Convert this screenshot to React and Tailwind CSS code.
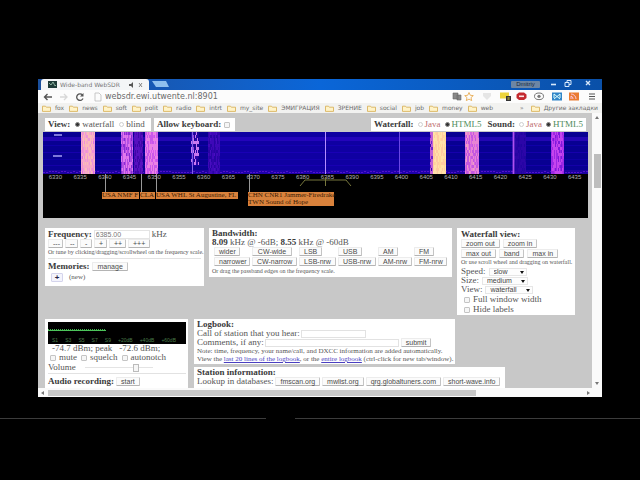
import React from "react";

const serif = "font-['Liberation_Serif',serif]";
const sans = "font-['Liberation_Sans',sans-serif]";

function Btn({ children, className = "" }) {
  return (
    <button
      className={`h-[9px] whitespace-nowrap rounded-[1px] border border-[#ececec] border-b-[#b4b4b4] border-r-[#c4c4c4] bg-[#fbfbfb] px-[4px] font-['Liberation_Sans',sans-serif] text-[7px] leading-[7px] text-[#4a4a4a] ${className}`}
    >
      {children}
    </button>
  );
}

function Radio({ name, checked, label, color = "text-[#555]" }) {
  return (
    <label className={`flex items-center gap-[2px] ${color}`}>
      <input
        type="radio"
        name={name}
        defaultChecked={checked}
        className="size-[5px] appearance-none rounded-full border border-[#cfcfcf] bg-white checked:border-[#888] checked:bg-[#333]"
      />
      {label}
    </label>
  );
}

function Check({ label, className = "gap-[3px]" }) {
  return (
    <label className={`flex items-center ${className}`}>
      <input type="checkbox" className="size-[6px] appearance-none rounded-[1px] border border-[#c4c4c4] bg-[#f6f6f6]" />
      {label}
    </label>
  );
}

function Pick({ label, value, width, indent = "pl-[4px]" }) {
  return (
    <label className="flex h-[9px] items-center gap-[3px]">
      {label}
      <span className={`relative flex ${width}`}>
        <select className={`h-[8px] w-full appearance-none border border-[#e6e6e6] bg-[#fdfdfd] font-['Liberation_Sans',sans-serif] text-[7px] leading-[6px] text-[#444] ${indent}`}>
          <option>{value}</option>
        </select>
        <svg viewBox="0 0 4 3" className="pointer-events-none absolute right-[3px] top-[3px] h-[3px] w-[4px]">
          <path d="M0 0h4L2 3z" fill="#111" />
        </svg>
      </span>
    </label>
  );
}

function Folder({ children }) {
  return (
    <a href="#" className="flex items-center gap-[4px] whitespace-nowrap">
      <svg viewBox="0 0 9 7" className="h-[7px] w-[9px]">
        <path d="M.5 1.2h3l.8 1h4.2v4.2h-8z" fill="#fff3c8" stroke="#d9b35e" strokeWidth=".9" />
      </svg>
      {children}
    </a>
  );
}

function rand(i, j) {
  const s = Math.sin(i * 127.1 + j * 311.7) * 43758.5453;
  return s - Math.floor(s);
}

const bands = [
  { x: 38, w: 14, colors: ["#e070e8", "#f090d8", "#f7a9c8", "#fbbcb8", "#ee98d8"] },
  { x: 78, w: 12, colors: ["#b848e4", "#b050e4", "#e078ee", "#8a2cd4", "#d868e8"] },
  { x: 91, w: 9, colors: ["#4a08b4", "#5810c0", "#4006a8"] },
  { x: 102, w: 13, colors: ["#d65cec", "#ea84e4", "#c858ea", "#ec7af0"] },
  { x: 148, w: 8, h: 32, colors: ["#9a3ce0", "#2a08a8", "#c878f0", "#1a0496"] },
  { x: 165, w: 12, colors: ["#3204ac", "#3e08b8", "#2804a4", "#480ec0"] },
  { x: 387, w: 3, colors: ["#7020d0", "#c060d8", "#3008a8"] },
  { x: 390, w: 13, colors: ["#ffd89a", "#ffe2a8", "#ffcca0", "#ffdca8"] },
  { x: 422, w: 14, colors: ["#d464e4", "#e884d4", "#c458e0", "#f09cc8"] },
  { x: 471, w: 12, colors: ["#2604a4", "#2c06a8", "#2004a0"] },
  { x: 508, w: 13, colors: ["#b030ec", "#9c28e4", "#c444ee", "#8018dc"] },
];

function Waterfall() {
  const cells = [];
  bands.forEach((b, k) => {
    const height = b.h || 42;
    for (let x = 0; x < b.w; x++) {
      for (let y = 0; y < height; y += 3) {
        const mix = rand(x + k * 31, 1) * 0.5 + rand(x + k * 17, y) * 0.5;
        cells.push(
          <rect key={`${k}-${x}-${y}`} x={b.x + x} y={y} width="1" height="3" fill={b.colors[Math.floor(mix * b.colors.length)]} />
        );
      }
    }
  });
  const specks = [];
  for (let x = 0; x < 545; x += 3) {
    specks.push(<rect key={x} x={x} y={39 + Math.floor(rand(x, 5) * 2)} width="2" height="1" fill="#5212cc" />);
  }
  return (
    <svg viewBox="0 0 545 42" preserveAspectRatio="none" className="block h-[42px] w-full">
      <rect width="545" height="42" fill="#080092" />
      <rect y="5" width="545" height="4" fill="#2406b4" />
      <rect y="13" width="545" height="1" fill="#1000a8" />
      <rect y="20" width="545" height="1" fill="#1600ac" />
      <rect y="27" width="545" height="1" fill="#0e00a4" />
      <rect y="33" width="545" height="1" fill="#1400a8" />
      <rect y="38" width="545" height="4" fill="#1c02a0" />
      <rect x="177" width="210" height="42" fill="#2400cc" opacity=".28" />
      {specks}
      {cells}
      <path d="M11 3h8M10 24h9" stroke="#a6a0f4" strokeWidth="1.5" />
      <path d="M149.500 0v42" stroke="#8060e8" strokeWidth="1" />
      <path d="M282.500 0v42" stroke="#b48cff" strokeWidth="1" />
      <path d="M356.500 0v42" stroke="#6a48e4" strokeWidth="1" />
      <path d="M470.500 0v42" stroke="#b050f0" strokeWidth="1.800" />
    </svg>
  );
}

function Station({ className, children }) {
  return (
    <div className={`absolute top-[60px] whitespace-nowrap bg-[#d9823c] text-[7px] leading-[7px] text-[#3c1c04] ${className}`}>
      {children}
    </div>
  );
}

const steps = Array.from({ length: 22 }, (_, i) => 6330 + i * 5);

function TitleBar() {
  return (
    <header className="flex h-[11px] items-end bg-gradient-to-r from-[#1a4f9c] via-[#0a66d8] to-[#0a50a8] pl-[3px]">
      <div className="flex h-[11px] w-[108px] items-center rounded-t-[3px] bg-[#f3f5f7] pl-[7px] pr-[6px]">
        <svg viewBox="0 0 9 7" className="h-[7px] w-[9px] shrink-0">
          <rect width="9" height="7" fill="#1c3a38" />
          <path d="M1 2l2 2 2-3 2 4 1-1" fill="none" stroke="#9fc8b4" strokeWidth=".8" />
        </svg>
        <span className="ml-[3px] grow whitespace-nowrap font-['DejaVu_Sans',sans-serif] text-[6px] leading-[9px] text-[#777]">Wide-band WebSDR</span>
        <svg viewBox="0 0 14 6" className="h-[6px] w-[14px] shrink-0">
          <path d="M0 2h2l2-2v6L2 4H0z" fill="#555" />
          <path d="M10 1l3 4M13 1l-3 4" stroke="#777" strokeWidth=".9" />
        </svg>
      </div>
      <svg viewBox="0 0 18 7" className="mb-[2px] ml-[3px] h-[7px] w-[18px]">
        <path d="M0 0h14l3 6H4z" fill="#8fc0ee" />
      </svg>
      <div className="grow" />
      <button className="mb-[2px] h-[7px] w-[29px] rounded-[1px] bg-[#6d86a4] font-['Liberation_Sans',sans-serif] text-[6px] leading-[7px] text-[#16263c]">Dmitriy</button>
      <svg viewBox="0 0 62 9" className="mb-[2px] h-[9px] w-[62px]" stroke="#d6e8fb" fill="none">
        <path d="M11 5.500h5" strokeWidth="1.600" />
        <path d="M25 3.500h4v4h-4zM27 3.500v-2h4v4h-2" strokeWidth="1" />
        <path d="M46 2l4 4M50 2l-4 4" strokeWidth="1.400" />
      </svg>
    </header>
  );
}

function Toolbar() {
  return (
    <nav className="flex h-[13px] items-center bg-[#fcfcfc] pl-[5px] pr-[6px]">
      <svg viewBox="0 0 60 10" className="h-[10px] w-[60px] shrink-0" fill="none">
        <path d="M9 5H1.500M4.500 2L1.500 5l3 3" stroke="#555" strokeWidth="1.400" />
        <path d="M17 5h7M21 2l3 3-3 3" stroke="#d8d8d8" strokeWidth="1.300" />
        <path d="M39.500 3A3.300 3.300 0 1 0 40 6.500" stroke="#555" strokeWidth="1.300" />
        <path d="M40.500 1v3.500H37z" fill="#555" />
        <path d="M52 1h4l2 2v6h-6z" stroke="#bbb" strokeWidth=".8" />
      </svg>
      <label className="flex grow">
        <input
          aria-label="Address"
          defaultValue="websdr.ewi.utwente.nl:8901"
          className="w-full bg-transparent pl-[2px] font-['DejaVu_Sans',sans-serif] text-[8px] leading-[11px] text-[#6a6a6a] outline-none"
        />
      </label>
      <svg viewBox="0 0 148 11" className="h-[11px] w-[148px] shrink-0" fill="none">
        <path d="M5 2h5v6H5zM9 4h4v5H9z" fill="#888" stroke="#666" strokeWidth=".6" />
        <path d="M21 1.500l1.300 2.800 3 .3-2.300 2 .7 3-2.700-1.500-2.700 1.500.7-3-2.300-2 3-.3z" stroke="#e8ad55" strokeWidth=".9" />
        <path d="M35 2h8v3l-4 4-4-4z" fill="#e6e6e6" />
        <rect x="52" y="1.500" width="9" height="6" fill="#ecd43c" />
        <rect x="58" y="5" width="5" height="5" fill="#333" />
        <path d="M60 6v3M61 6v3" stroke="#e6d23c" strokeWidth=".6" />
        <path d="M71 1.500h5l2.500 2v3.500l-2.500 2h-5l-2.500-2v-3.500z" fill="#c42a30" />
        <path d="M71 5.300h5" stroke="#fbe6e6" strokeWidth="1.600" />
        <ellipse cx="91" cy="5.300" rx="4.500" ry="3.300" stroke="#777" strokeWidth="1" />
        <circle cx="91" cy="5.300" r="1.600" fill="#777" />
        <rect x="104" y="1.500" width="10" height="8" fill="#2f84c8" />
        <path d="M106 3l6 5M112 3l-6 5M106 3v4M112 3v4" stroke="#dff" strokeWidth="1" />
        <rect x="121" y="1.500" width="10" height="8" fill="#e97c32" />
        <path d="M123 8V5M125 8a3 3 0 0 0-2-3M128 8a5 5 0 0 0-5-5" stroke="#fce" strokeWidth=".9" />
        <path d="M141 3h6M141 5.500h6M141 8h6" stroke="#555" strokeWidth="1.200" />
      </svg>
    </nav>
  );
}

function Bookmarks() {
  return (
    <nav className="flex h-[10px] items-center bg-[#f2f2f0] pl-[4px] pr-[4px] font-['DejaVu_Sans',sans-serif] text-[6px] leading-[8px] text-[#6b6b6b]">
      <div className="flex gap-[5px]">
        {["fox", "news", "soft", "polit", "radio", "intrt", "my_site", "ЭМИГРАЦИЯ", "ЗРЕНИЕ", "social", "job", "money", "web"].map((b) => (
          <Folder key={b}>{b}</Folder>
        ))}
      </div>
      <span className="grow pr-[7px] text-right">»</span>
      <Folder>Другие закладки</Folder>
    </nav>
  );
}

function Receiver() {
  return (
    <section className="relative h-[86px] bg-black">
      <Waterfall />
      <div className={`mr-[1px] grid text-center text-[6px] leading-[6px] text-[#b4b4b4] [grid-template-columns:repeat(22,minmax(0,1fr))] ${sans}`}>
        {steps.map((s) => (
          <span key={s}>{s}</span>
        ))}
      </div>
      <svg viewBox="0 0 545 44" className="absolute left-0 top-[42px] h-[44px] w-[545px]" fill="none">
        <path d="M62.500 0v18M98.500 0v18M113.500 0v18M206.500 0v18" stroke="#999" strokeWidth="1" />
        <path d="M257 12l5-6h41l5 6M282.500 3v9" stroke="#77773c" strokeWidth="1" />
      </svg>
      <Station className="left-[59px] h-[7px] w-[37px]">USA NMF F</Station>
      <Station className="left-[97px] h-[7px] w-[15px]">CLA</Station>
      <Station className="left-[113px] h-[7px] w-[82px]">USA WHL St Augustine, FL</Station>
      <Station className="left-[205px] h-[14px] w-[86px]">
        CHN CNR1 Jammer-Firedrake
        <br />
        TWN Sound of Hope
      </Station>
    </section>
  );
}

const widths = [
  ["wider", "w-[26px]"],
  ["CW-wide", "w-[40px]"],
  ["LSB", "w-[23px]"],
  ["USB", "w-[24px]"],
  ["AM", "w-[20px]"],
  ["FM", "w-[20px]"],
  ["narrower", "w-[36px]"],
  ["CW-narrow", "w-[45px]"],
  ["LSB-nrw", "w-[37px]"],
  ["USB-nrw", "w-[38px]"],
  ["AM-nrw", "w-[34px]"],
  ["FM-nrw", "w-[33px]"],
];

const tuning = [
  ["---", "w-[15px]"],
  ["--", "w-[13px]"],
  ["-", "w-[12px]"],
  ["+", "w-[13px]"],
  ["++", "w-[17px]"],
  ["+++", "w-[22px]"],
];

function Meter() {
  const dots = [];
  for (let x = 0; x < 58; x += 2) {
    dots.push(<rect key={x} x={x} y={7} width="1" height="2" fill="#3fae4c" />);
  }
  return (
    <div className="h-[22px] bg-black">
      <svg viewBox="0 0 138 15" className="block h-[15px] w-[138px]">
        {dots}
        <rect y="8" width="58" height="1" fill="#4cc45a" />
      </svg>
      <div className={`flex justify-between pl-[4px] pr-[10px] text-[5px] leading-[6px] text-[#4b7d4b] ${sans}`}>
        {["S1", "S3", "S5", "S7", "S9", "+20dB", "+40dB", "+60dB"].map((s) => (
          <span key={s}>{s}</span>
        ))}
      </div>
    </div>
  );
}

function Page() {
  const bold = "font-bold text-[#3a3a3a]";
  return (
    <main className={`grow bg-[#c8c8c8] pl-[5px] pr-[4px] pt-[5px] text-[9px] leading-[9px] text-[#555] ${serif}`}>
      <div className="mb-[1px] flex h-[13px] gap-[3px] pl-[2px] pr-[2px] *:flex *:items-center *:whitespace-nowrap *:bg-white">
        <fieldset className="w-[106px] gap-[5px] pl-[3px]">
          <b className={bold}>View:</b>
          <Radio name="view" checked label="waterfall" />
          <Radio name="view" label="blind" />
        </fieldset>
        <label className="w-[81px] gap-[3px] pl-[3px]">
          <b className={bold}>Allow keyboard:</b>
          <input type="checkbox" className="size-[6px] appearance-none rounded-[1px] border border-[#c4c4c4] bg-[#f6f6f6]" />
        </label>
        <fieldset className="ml-auto w-[215px] gap-[4px] pl-[3px]">
          <b className={bold}>Waterfall:</b>
          <Radio name="wf" label="Java" color="text-[#c07070]" />
          <Radio name="wf" checked label="HTML5" color="text-[#4f8c5c]" />
          <b className={`ml-[2px] ${bold}`}>Sound:</b>
          <Radio name="snd" label="Java" color="text-[#c07070]" />
          <Radio name="snd" checked label="HTML5" color="text-[#4f8c5c]" />
        </fieldset>
      </div>

      <Receiver />

      <div className="mt-[10px] flex items-start gap-[5px] pl-[2px]">
        <section className="h-[58px] w-[159px] bg-white px-[3px] pt-[2px]">
          <label className="flex h-[9px] items-center gap-[2px]">
            <b className={bold}>Frequency:</b>
            <input defaultValue="6385.00" className={`h-[9px] w-[56px] border border-[#e4e4e4] pl-[1px] text-[7px] text-[#777] ${sans}`} />
            kHz
          </label>
          <div className="flex gap-[2px]">
            {tuning.map(([t, w]) => (
              <Btn key={t} className={`px-[0px] ${w}`}>{t}</Btn>
            ))}
          </div>
          <p className="whitespace-nowrap pb-[2px] text-[6px] leading-[8px]">Or tune by clicking/dragging/scrollwheel on the frequency scale.</p>
          <hr className="mb-[3px] border-[#e2e2e2]" />
          <div className="flex items-center gap-[3px]">
            <b className={bold}>Memories:</b>
            <Btn>manage</Btn>
          </div>
          <div className="mt-[2px] flex items-center gap-[6px] pl-[3px] text-[7px]">
            <button className={`h-[9px] w-[12px] rounded-[1px] border border-[#d4d4ec] bg-[#f4f4fc] text-[8px] font-bold leading-[7px] text-[#224] ${sans}`}>+</button>
            (new)
          </div>
        </section>

        <section className="h-[49px] w-[243px] bg-white px-[3px] pt-[1px]">
          <h2 className={bold}>Bandwidth:</h2>
          <p><b className={bold}>8.09</b> kHz @ -6dB; <b className={bold}>8.55</b> kHz @ -60dB</p>
          <div className="grid grid-cols-[38px_47px_39px_40px_36px_34px] gap-y-[1px] pl-[2px]">
            {widths.map(([t, w]) => (
              <Btn key={t} className={`px-[0px] ${w}`}>{t}</Btn>
            ))}
          </div>
          <p className="mt-[1px] text-[6px] leading-[8px]">Or drag the passband edges on the frequency scale.</p>
        </section>

        <section className="h-[87px] w-[118px] bg-white px-[4px] pt-[2px]">
          <h2 className={bold}>Waterfall view:</h2>
          <div className="mb-[1px] flex gap-[3px]">
            <Btn>zoom out</Btn>
            <Btn>zoom in</Btn>
          </div>
          <div className="flex gap-[3px]">
            <Btn>max out</Btn>
            <Btn>band</Btn>
            <Btn>max in</Btn>
          </div>
          <p className="whitespace-nowrap text-[6px] leading-[9px]">Or use scroll wheel and dragging on waterfall.</p>
          <Pick label="Speed:" value="slow" width="w-[38px]" />
          <Pick label="Size:" value="medium" width="w-[46px]" />
          <Pick label="View:" value="waterfall" width="w-[48px]" />
          <div className="flex flex-col gap-[1px] pl-[3px] pt-[1px]">
            <Check label="Full window width" />
            <Check label="Hide labels" />
          </div>
        </section>
      </div>

      <div className="mt-[4px] flex items-stretch gap-[6px] pl-[2px]">
        <section className="w-[143px] bg-white pl-[3px] pr-[2px] pt-[3px]">
          <Meter />
          <div className="flex gap-[7px] whitespace-nowrap pl-[4px]">
            <span>-74.7 dBm; peak</span>
            <span>-72.6 dBm;</span>
          </div>
          <div className="flex gap-[4px] pl-[2px]">
            <Check label="mute" />
            <Check label="squelch" />
            <Check label="autonotch" />
          </div>
          <label className="flex h-[11px] items-center gap-[9px]">
            Volume
            <input
              type="range"
              defaultValue="78"
              className="h-[9px] w-[68px] appearance-none bg-[linear-gradient(#e4e4e4,#e4e4e4)] bg-[length:100%_1px] bg-center bg-no-repeat [&::-webkit-slider-thumb]:h-[8px] [&::-webkit-slider-thumb]:w-[6px] [&::-webkit-slider-thumb]:appearance-none [&::-webkit-slider-thumb]:border [&::-webkit-slider-thumb]:border-[#bbb] [&::-webkit-slider-thumb]:bg-[#f6f6f6]"
            />
          </label>
          <hr className="mb-[3px] border-[#e2e2e2]" />
          <div className="flex items-center gap-[2px]">
            <b className={bold}>Audio recording:</b>
            <Btn>start</Btn>
          </div>
        </section>

        <div className="flex flex-col items-start gap-[3px]">
          <section className="h-[45px] w-[261px] whitespace-nowrap bg-white pl-[3px] pt-[1px]">
            <h2 className={bold}>Logbook:</h2>
            <label className="flex items-center gap-[1px]">
              Call of station that you hear:
              <input className="h-[8px] w-[65px] border border-[#e2e2e2]" />
            </label>
            <div className="flex items-center gap-[2px]">
              <label className="flex items-center gap-[1px]">
                Comments, if any:
                <input className="h-[8px] w-[134px] border border-[#e2e2e2]" />
              </label>
              <Btn>submit</Btn>
            </div>
            <p className="text-[7px] leading-[8px]">Note: time, frequency, your name/call, and DXCC information are added automatically.</p>
            <p className="text-[7px] leading-[8px]">
              View the <a href="#last" className="text-[#4a3fc0] underline">last 20 lines of the logbook</a>, or the{" "}
              <a href="#entire" className="text-[#4a3fc0] underline">entire logbook</a> (ctrl-click for new tab/window).
            </p>
          </section>
          <section className="h-[21px] w-[311px] whitespace-nowrap bg-white pl-[3px] pt-[1px]">
            <h2 className={bold}>Station information:</h2>
            <div className="flex items-center gap-[2px]">
              Lookup in databases:
              <Btn>fmscan.org</Btn>
              <Btn>mwlist.org</Btn>
              <Btn>qrg.globaltuners.com</Btn>
              <Btn>short-wave.info</Btn>
            </div>
          </section>
        </div>
      </div>
    </main>
  );
}

export default function App() {
  return (
    <div className="min-h-screen overflow-hidden bg-black pt-[79px]">
      <div className="mx-[38px] flex flex-col bg-white">
        <TitleBar />
        <Toolbar />
        <Bookmarks />
        <div className="flex h-[275px] overflow-hidden">
          <Page />
          <div className="flex w-[10px] shrink-0 flex-col items-center bg-[#fafafa] py-[3px]">
            <svg viewBox="0 0 4 3" className="h-[3px] w-[4px]"><path d="M0 3h4L2 0z" fill="#777" /></svg>
            <div className="mt-[35px] h-[34px] w-[7px] bg-[#bdbdbd]" />
            <svg viewBox="0 0 4 3" className="mt-auto h-[3px] w-[4px]"><path d="M0 0h4L2 3z" fill="#777" /></svg>
          </div>
        </div>
        <div className="flex h-[9px] items-center bg-[#fafafa] pl-[3px] pr-[12px]">
          <svg viewBox="0 0 3 4" className="h-[4px] w-[3px]"><path d="M3 0v4L0 2z" fill="#777" /></svg>
          <div className="ml-[4px] h-[6px] w-[78%] bg-[#c8c8c8]" />
          <svg viewBox="0 0 3 4" className="ml-auto h-[4px] w-[3px]"><path d="M0 0v4l3-2z" fill="#777" /></svg>
        </div>
      </div>
      <div className="mt-[21px] flex gap-[29px]">
        <div className="h-[1px] w-[266px] bg-[#3c3c3c]" />
        <div className="h-[1px] grow bg-[#3c3c3c]" />
      </div>
    </div>
  );
}
